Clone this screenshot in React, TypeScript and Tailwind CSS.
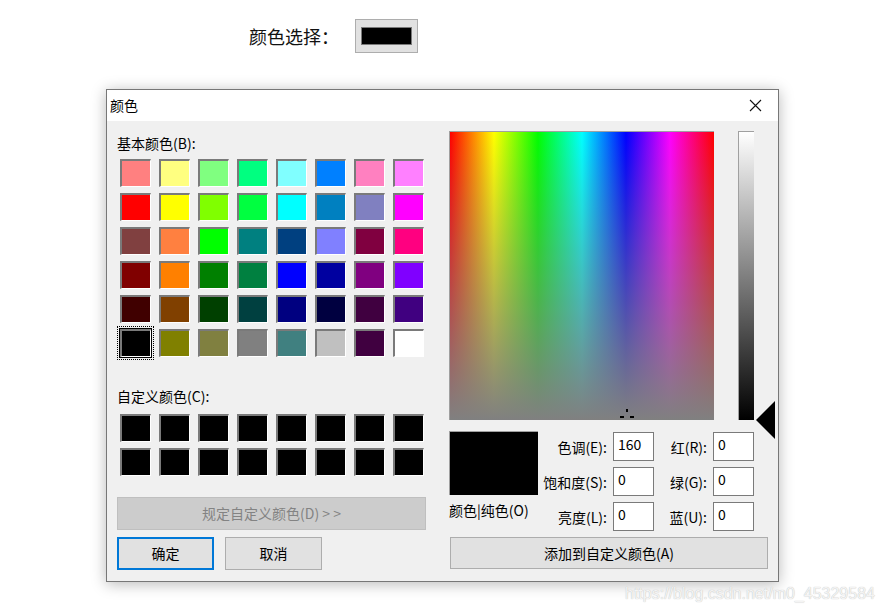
import React from 'react';

const basic = [
  ['#ff8080', '#ffff80', '#80ff80', '#00ff80', '#80ffff', '#0080ff', '#ff80c0', '#ff80ff'],
  ['#ff0000', '#ffff00', '#80ff00', '#00ff40', '#00ffff', '#0080c0', '#8080c0', '#ff00ff'],
  ['#804040', '#ff8040', '#00ff00', '#008080', '#004080', '#8080ff', '#800040', '#ff0080'],
  ['#800000', '#ff8000', '#008000', '#008040', '#0000ff', '#0000a0', '#800080', '#8000ff'],
  ['#400000', '#804000', '#004000', '#004040', '#000080', '#000040', '#400040', '#400080'],
  ['#000000', '#808000', '#808040', '#808080', '#408080', '#c0c0c0', '#400040', '#ffffff'],
];

function Swatch({ color, selected = false }: { color: string; selected?: boolean }) {
  return (
    <div className="relative h-[28px] w-[31px]">
      {selected && (
        <div className="absolute -left-[3px] -top-[3px] h-[34px] w-[37px] border border-dotted border-black" />
      )}
      <div
        className={`h-full w-full border-l-2 border-t-2 border-b border-r border-l-[#7a7a7a] border-t-[#7a7a7a] border-b-white border-r-white ${
          selected ? 'outline outline-1 outline-black' : ''
        }`}
        style={{ backgroundColor: color }}
      />
    </div>
  );
}

function Field({ label, value }: { label: string; value: string }) {
  return (
    <>
      <div className="flex h-[29px] items-center justify-end whitespace-nowrap text-[14px] leading-none text-black">
        {label}
      </div>
      <div className="h-[29px] w-[41px] border border-[#7a7a7a] bg-white pl-[4px] pt-[2px] text-[14px] leading-[18px] text-black">
        {value}
      </div>
    </>
  );
}

export default function App() {
  return (
    <div
      className="relative h-[612px] w-[883px] overflow-hidden bg-white"
      style={{ fontFamily: '"Noto Sans CJK SC", "Noto Sans", sans-serif' }}
    >
      {/* top row */}
      <div className="flex items-center pl-[249px] pt-[19px]">
        <span className="text-[18px] leading-[34px] text-[#111]">颜色选择：</span>
        <button className="ml-[16px] flex h-[34px] w-[63px] items-center justify-center border border-[#adadad] bg-[#e1e1e1]">
          <div className="h-[18px] w-[51px] border border-[#7a7a7a] bg-black" />
        </button>
      </div>

      {/* dialog */}
      <div className="ml-[106px] mt-[36px] flex h-[493px] w-[673px] flex-col border border-[#777] bg-[#f0f0f0] shadow-[0_2px_14px_rgba(0,0,0,0.28)]">
        <div className="flex h-[31px] items-center justify-between bg-white pl-[3px] pr-[14px]">
          <span className="text-[14px] text-black">颜色</span>
          <svg width="13" height="13" viewBox="0 0 13 13" className="mr-[2px]">
            <path d="M1 1 L12 12 M12 1 L1 12" stroke="#111" strokeWidth="1.1" />
          </svg>
        </div>

        <div className="flex flex-1">
          {/* left column */}
          <div className="flex w-[342px] flex-col pl-[10px] pt-[12px]">
            <div className="h-[20px] text-[14px] leading-[20px] text-black">基本颜色(B):</div>
            <div className="ml-[3px] mt-[6px] grid grid-cols-[repeat(8,31px)] gap-x-[8px] gap-y-[6px]">
              {basic.map((row, r) =>
                row.map((c, i) => <Swatch key={`${r}-${i}`} color={c} selected={r === 5 && i === 0} />)
              )}
            </div>
            <div className="mt-[29px] h-[20px] text-[14px] leading-[20px] text-black">自定义颜色(C):</div>
            <div className="ml-[3px] mt-[8px] grid grid-cols-[repeat(8,31px)] gap-x-[8px] gap-y-[6px]">
              {Array.from({ length: 16 }).map((_, i) => (
                <Swatch key={i} color="#000000" />
              ))}
            </div>
            <button className="mt-[21px] h-[33px] w-[309px] border border-[#bfbfbf] bg-[#cccccc] text-[14px] text-[#838383]">
              规定自定义颜色(D) &gt; &gt;
            </button>
            <div className="mt-[7px] flex gap-[11px]">
              <button className="h-[33px] w-[97px] border-2 border-[#0078d7] bg-[#e1e1e1] text-[14px] text-black">
                确定
              </button>
              <button className="h-[33px] w-[97px] border border-[#adadad] bg-[#e1e1e1] text-[14px] text-black">
                取消
              </button>
            </div>
          </div>

          {/* right column */}
          <div className="flex flex-col pt-[10px]">
            <div className="flex h-[289px]">
              <div
                className="relative h-[289px] w-[265px] border-l border-t border-[#a0a0a0]"
                style={{
                  background:
                    'linear-gradient(to bottom, rgba(128,128,128,0), rgba(128,128,128,1)), linear-gradient(to right, #ff0000, #ffff00, #00ff00, #00ffff, #0000ff, #ff00ff, #ff0000)',
                }}
              >
                <svg width="16" height="12" viewBox="0 0 16 12" className="absolute bottom-0 left-[169px]">
                  <rect x="7" y="1" width="2" height="3" fill="#000" />
                  <rect x="1" y="8" width="4" height="2" fill="#000" />
                  <rect x="11" y="8" width="4" height="2" fill="#000" />
                </svg>
              </div>
              <div className="relative ml-[24px] h-[289px] w-[16px] border-l border-t border-[#a0a0a0] bg-[linear-gradient(to_bottom,#ffffff,#000000)]">
                <svg width="20" height="38" viewBox="0 0 20 38" className="absolute -bottom-[19px] left-[17px]">
                  <path d="M0 19 L19 0 L19 38 Z" fill="#000" />
                </svg>
              </div>
            </div>

            <div className="mt-[11px] flex">
              <div className="flex w-[89px] flex-col">
                <div className="h-[64px] w-[89px] border-l border-t border-[#a0a0a0] bg-black" />
                <div className="mt-[6px] whitespace-nowrap text-[14px] leading-[18px] text-black">颜色|纯色(O)</div>
              </div>
              <div className="mt-[1px] grid grid-cols-[69px_41px_47px_41px] gap-x-[6px] gap-y-[6px]">
                <Field label="色调(E):" value="160" />
                <Field label="红(R):" value="0" />
                <Field label="饱和度(S):" value="0" />
                <Field label="绿(G):" value="0" />
                <Field label="亮度(L):" value="0" />
                <Field label="蓝(U):" value="0" />
              </div>
            </div>

            <button className="ml-[1px] mt-[6px] h-[32px] w-[318px] border border-[#adadad] bg-[#e1e1e1] text-[14px] text-black">
              添加到自定义颜色(A)
            </button>
          </div>
        </div>
      </div>

      <div
        className="absolute left-[625px] top-[584px] text-[16px] leading-[20px] text-[#f4f4f4] [text-shadow:0_0_1px_#b0b0b0]"
        style={{ fontFamily: '"Liberation Sans", Arial, sans-serif' }}
      >
        https://blog.csdn.net/m0_45329584
      </div>
    </div>
  );
}
